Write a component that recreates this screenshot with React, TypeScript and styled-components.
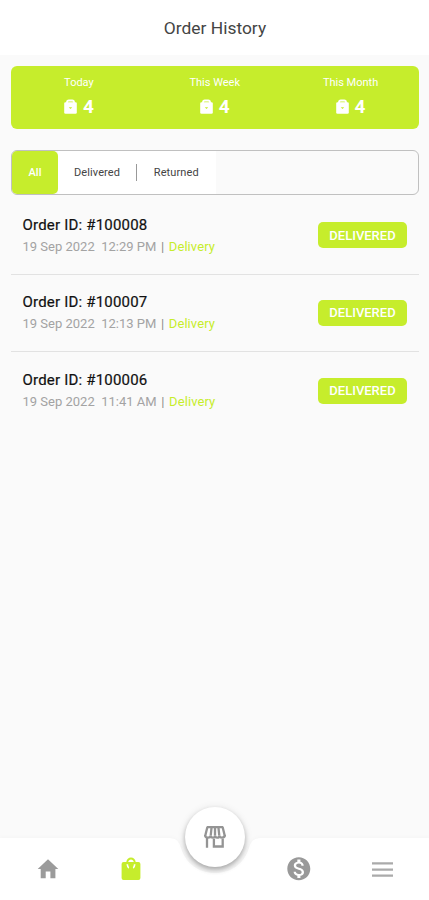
import React from 'react';
import styled, { createGlobalStyle } from 'styled-components';

const LIME = '#c6ed2c';
const GREY = '#9b9b9b';

const GlobalStyle = createGlobalStyle`
  * { box-sizing: border-box; }
  body { margin: 0; background: #fafafa; font-family: Roboto, "Liberation Sans", sans-serif; }
`;

const Screen = styled.div`
  width: 429px;
  height: 900px;
  display: flex;
  flex-direction: column;
  background: #fafafa;
  overflow: hidden;
`;

const Header = styled.header`
  height: 55px;
  flex: none;
  display: flex;
  align-items: center;
  justify-content: center;
  background: #fff;
  color: #444;
  font-size: 17.4px;
  padding-left: 1px;
`;

const Content = styled.main`
  flex: 1;
  padding: 11px 10.5px 0 11px;
`;

const Summary = styled.section`
  height: 63px;
  display: grid;
  grid-template-columns: repeat(3, 1fr);
  background: ${LIME};
  border-radius: 6px;
  color: #fff;
`;

const SummaryCell = styled.div`
  display: flex;
  flex-direction: column;
  align-items: center;
  padding-top: 10px;
`;

const SummaryLabel = styled.span`
  font-size: 11px;
  line-height: 14px;
`;

const SummaryValue = styled.span`
  display: flex;
  align-items: center;
  gap: 6px;
  margin-top: 5px;
  font-size: 19px;
  line-height: 24px;
  font-weight: 700;
`;

const Filters = styled.nav`
  display: flex;
  height: 45px;
  margin-top: 21px;
  border: 1.5px solid #c0c0c0;
  border-radius: 6px;
`;

const FilterTab = styled.button<{ $width: number; $active?: boolean }>`
  width: ${p => p.$width}px;
  border: 0;
  padding: 0;
  border-radius: ${p => (p.$active ? '5px' : '0')};
  background: ${p => (p.$active ? LIME : '#fff')};
  color: ${p => (p.$active ? '#fff' : '#444')};
  font: ${p => (p.$active ? 500 : 400)} 11px Roboto, sans-serif;
  letter-spacing: 0.1px;
`;

const FilterSeparator = styled.span`
  display: flex;
  align-items: center;
  background: #fff;
  &::before {
    content: '';
    width: 1px;
    height: 17px;
    background: #999;
  }
`;

const Row = styled.article<{ $last?: boolean }>`
  display: flex;
  align-items: center;
  justify-content: space-between;
  height: 77.5px;
  padding: 0 11.5px;
  border-bottom: ${p => (p.$last ? '0' : '1.5px solid #e2e2e2')};
`;

const Orders = styled.section`
  margin-top: 2px;
`;

const OrderTitle = styled.div`
  font-size: 15px;
  line-height: 18px;
  font-weight: 400;
  color: #111;
  -webkit-text-stroke: 0.2px #111;
  letter-spacing: 0.2px;
`;

const OrderMeta = styled.div`
  display: flex;
  margin-top: 4px;
  font-size: 13px;
  line-height: 17px;
  color: #a3a3a3;
  white-space: pre;
`;

const MetaBar = styled.span`
  width: 12.5px;
  text-align: center;
  color: #8a8a8a;
`;

const MetaType = styled.span`
  color: ${LIME};
  letter-spacing: 0.08px;
`;

const Status = styled.span`
  display: flex;
  align-items: center;
  justify-content: center;
  width: 89px;
  height: 26px;
  border-radius: 5px;
  background: ${LIME};
  color: #fff;
  font-size: 13px;
  font-weight: 500;
`;

const BottomBar = styled.footer`
  position: relative;
  flex: none;
  height: 62px;
`;

const BarShape = styled.svg`
  position: absolute;
  inset: 0;
  filter: drop-shadow(0 0 2px rgba(0, 0, 0, 0.03));
`;

const BarItems = styled.div`
  position: relative;
  height: 62px;
  display: grid;
  grid-template-columns: 90px 76px 88px 83px 84px;
  padding-left: 3px;
`;

const BarItem = styled.div`
  display: flex;
  align-items: center;
  justify-content: center;
`;

const StoreButton = styled.div`
  position: absolute;
  left: 185px;
  top: -31px;
  width: 60px;
  height: 60px;
  border-radius: 50%;
  background: #fff;
  display: flex;
  align-items: center;
  justify-content: center;
  box-shadow: 0 3px 5px rgba(0, 0, 0, 0.28), 0 1px 8px rgba(0, 0, 0, 0.1);
`;

const LockBag = () => (
  <svg width="13" height="16" viewBox="0 0 13 16">
    <path d="M3 5V3.2Q3 1.5 4.8 1.5h3.4Q10 1.5 10 3.2V5" fill="none" stroke="#fff" strokeWidth="1.8" />
    <rect x=".2" y="3.2" width="12.6" height="11.6" rx="1.3" fill="#fff" />
    <path d="M4.8 8.3h3.4L6.5 9.9z" fill={LIME} />
  </svg>
);

const HomeIcon = () => (
  <svg width="22" height="20" viewBox="0 0 22 20">
    <path fill={GREY} d="M11 .3 21.3 10H18.4v9.3h-5v-6.8H8.7v6.8h-5V10H.7z" />
  </svg>
);

const BagIcon = () => (
  <svg width="20" height="24" viewBox="0 0 20 24">
    <path
      fill={LIME}
      fillRule="evenodd"
      d="M2.6 5H5.3C5.7 2.2 7.5.6 10 .6S14.3 2.2 14.7 5h2.7a2 2 0 0 1 2 2v14a2 2 0 0 1-2 2H2.6a2 2 0 0 1-2-2V7a2 2 0 0 1 2-2zM7.2 5h5.6C12.4 3.3 11.4 2.4 10 2.4S7.6 3.3 7.2 5z"
    />
    <path d="M6.3 7.3q.2 3 1.6 3.6M13.7 7.3q-.2 3-1.6 3.6" stroke="#fff" strokeWidth="1.7" fill="none" />
  </svg>
);

const StoreIcon = () => (
  <svg width="22" height="22" viewBox="0 0 22 22" fill="none" stroke="#949494" strokeWidth="2.3">
    <path d="M2.8 1.2h16.4M3.4 1 1.3 9.6M18.6 1l2.1 8.6M7.6 1.2 6.7 9.5M11 1.2v8.3M14.4 1.2l.9 8.3M3 12v9.7M9.9 13v7.5h8.8V13" />
    <path d="M1 9q.2 2.6 2.9 2.6T6.7 9.5q0 2.1 2.2 2.1T11 9.5q0 2.1 2.2 2.1t2.1-2.1q0 2.1 2.7 2.1T21 9" strokeWidth="2.3" />
  </svg>
);

const DollarIcon = () => (
  <svg width="27.6" height="27.6" viewBox="0 0 24 24">
    <path
      fill="#999"
      d="M12 2C6.48 2 2 6.48 2 12s4.48 10 10 10 10-4.48 10-10S17.52 2 12 2zm1.41 16.09V20h-2.67v-1.93c-1.71-.36-3.16-1.46-3.27-3.4h1.96c.1 1.05.82 1.87 2.65 1.87 1.96 0 2.4-.98 2.4-1.59 0-.83-.44-1.61-2.67-2.14-2.48-.6-4.18-1.62-4.18-3.67 0-1.72 1.39-2.84 3.11-3.21V4h2.67v1.95c1.86.45 2.79 1.86 2.85 3.39H14.3c-.05-1.11-.64-1.87-2.22-1.87-1.5 0-2.4.68-2.4 1.64 0 .84.65 1.39 2.67 1.91s4.18 1.39 4.18 3.91c-.01 1.83-1.38 2.83-3.12 3.16z"
    />
  </svg>
);

const MenuIcon = () => (
  <svg width="21" height="15" viewBox="0 0 21 15">
    <path stroke="#aaa" strokeWidth="2.2" d="M0 1.4h21M0 7.6h21M0 13.7h21" />
  </svg>
);

const summary = ['Today', 'This Week', 'This Month'];

const orders = [
  { id: 100008, time: '12:29 PM' },
  { id: 100007, time: '12:13 PM' },
  { id: 100006, time: '11:41 AM' },
];

export default function App() {
  return (
    <Screen>
      <GlobalStyle />
      <Header>Order History</Header>
      <Content>
        <Summary>
          {summary.map(label => (
            <SummaryCell key={label}>
              <SummaryLabel>{label}</SummaryLabel>
              <SummaryValue>
                <LockBag />4
              </SummaryValue>
            </SummaryCell>
          ))}
        </Summary>
        <Filters>
          <FilterTab $width={46} $active>All</FilterTab>
          <FilterTab $width={78}>Delivered</FilterTab>
          <FilterSeparator />
          <FilterTab $width={78.5}>Returned</FilterTab>
        </Filters>
        <Orders>
          {orders.map((order, i) => (
            <Row key={order.id} $last={i === orders.length - 1}>
              <div>
                <OrderTitle>Order ID: #{order.id}</OrderTitle>
                <OrderMeta>
                  {`19 Sep 2022  ${order.time}`}
                  <MetaBar>|</MetaBar>
                  <MetaType>Delivery</MetaType>
                </OrderMeta>
              </div>
              <Status>DELIVERED</Status>
            </Row>
          ))}
        </Orders>
      </Content>
      <BottomBar>
        <BarShape width="429" height="62" viewBox="0 0 429 62">
          <path fill="#fff" d="M0 0H168C177 0 179 4 181 10C186 26 199 35 215 35S244 26 249 10C251 4 253 0 262 0H429V62H0z" />
        </BarShape>
        <BarItems>
          <BarItem><HomeIcon /></BarItem>
          <BarItem><BagIcon /></BarItem>
          <BarItem />
          <BarItem><DollarIcon /></BarItem>
          <BarItem><MenuIcon /></BarItem>
        </BarItems>
        <StoreButton><StoreIcon /></StoreButton>
      </BottomBar>
    </Screen>
  );
}
